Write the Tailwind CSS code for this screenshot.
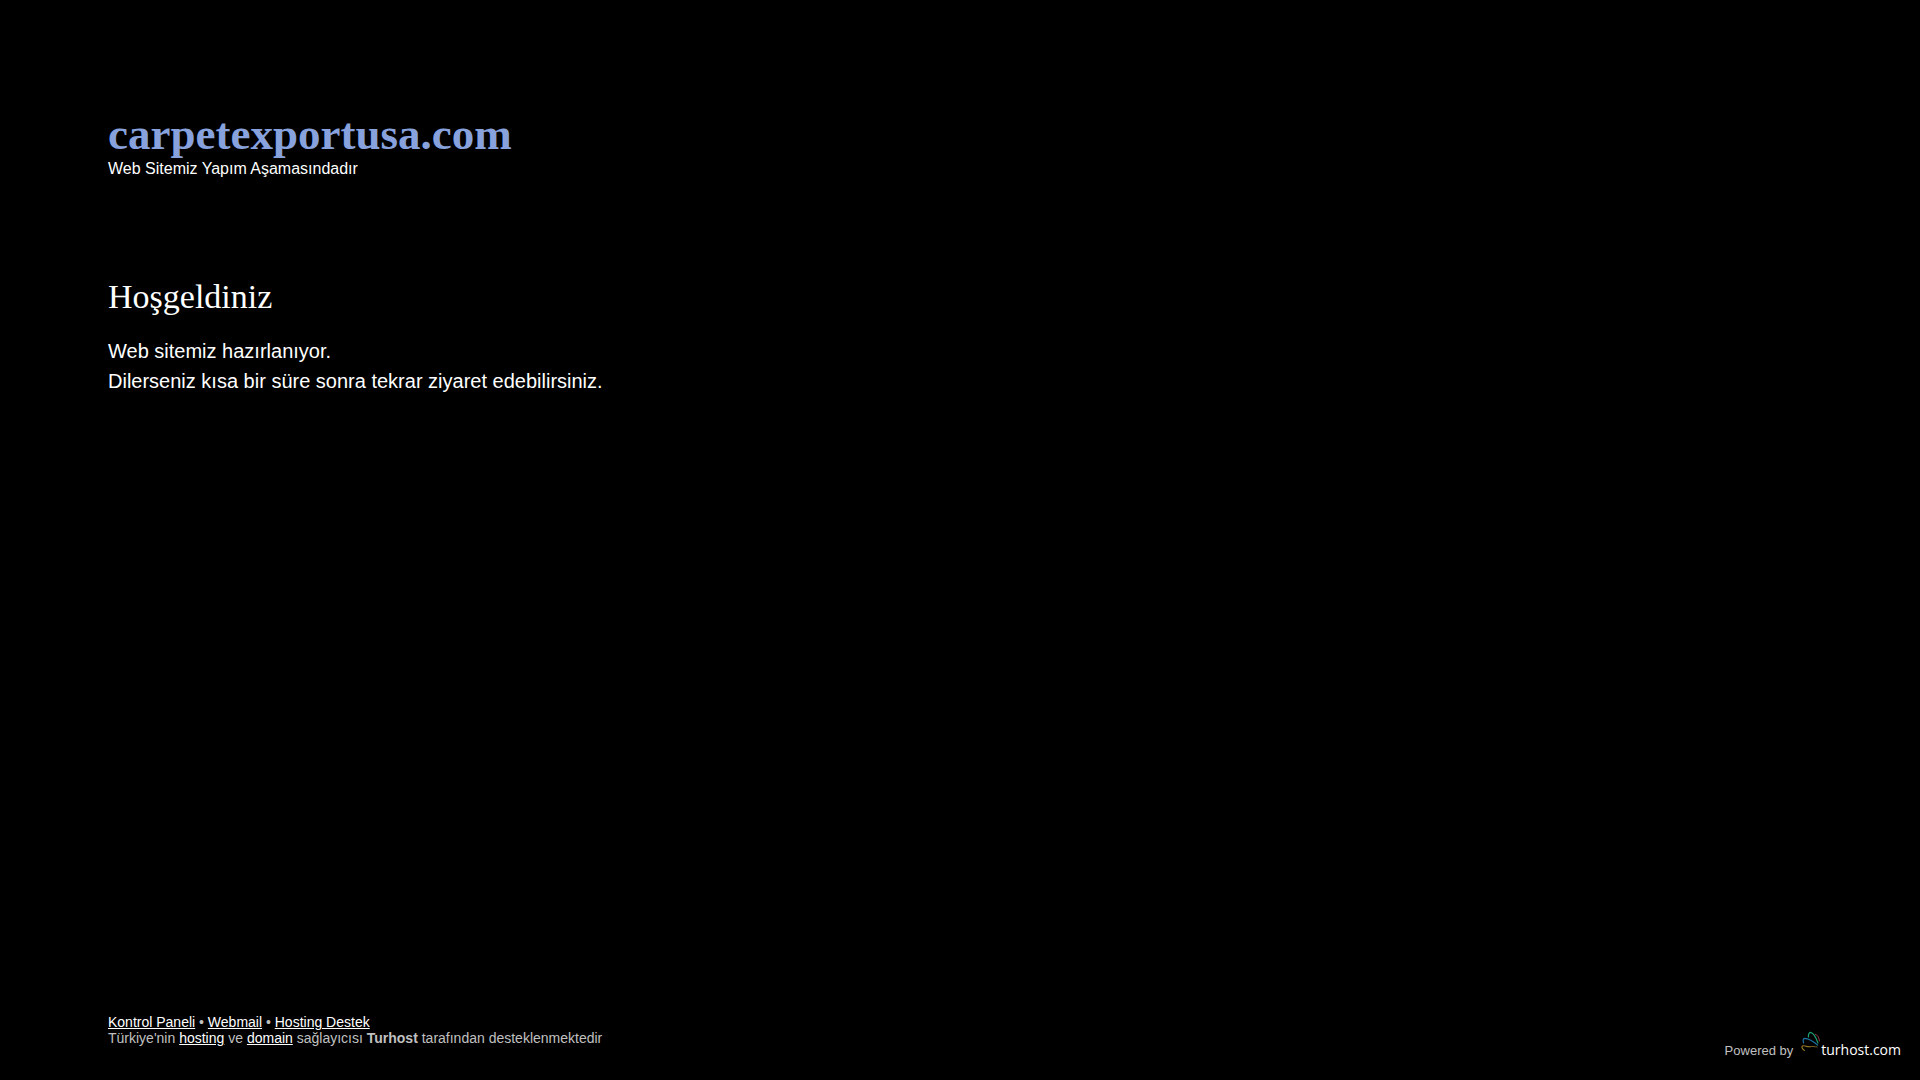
<!DOCTYPE html>
<html lang="tr">
  <head>
    <meta charset="UTF-8" />
    <meta name="viewport" content="width=device-width, initial-scale=1.0" />
    <title>carpetexportusa.com</title>
    <script src="https://cdn.jsdelivr.net/npm/@tailwindcss/browser@4"></script>
  </head>
  <body class="min-h-screen flex flex-col justify-between bg-black text-white font-['Liberation_Sans',sans-serif]">
    <main class="px-27 pt-27">
      <h1 class="font-['Liberation_Serif',serif] text-[45px] leading-[52px] font-bold text-[#87a2dc]">carpetexportusa.com</h1>
      <p class="text-base leading-[18px]">Web Sitemiz Yapım Aşamasındadır</p>
      <h2 class="mt-[99px] font-['Liberation_Serif',serif] text-[34px] leading-[39px]">Hoşgeldiniz</h2>
      <p class="mt-5 text-xl leading-[30px]">
        Web sitemiz hazırlanıyor.<br />
        Dilerseniz kısa bir süre sonra tekrar ziyaret edebilirsiniz.
      </p>
    </main>
    <footer class="flex items-end justify-between pl-27 pr-[19px] pb-[19px]">
      <div class="pb-[15px] text-sm leading-4 text-[#c0c0c0]">
        <p><a href="#" class="text-white underline">Kontrol Paneli</a> • <a href="#" class="text-white underline">Webmail</a> • <a href="#" class="text-white underline">Hosting Destek</a></p>
        <p>Türkiye'nin <a href="#" class="text-white underline">hosting</a> ve <a href="#" class="text-white underline">domain</a> sağlayıcısı <strong>Turhost</strong> tarafından desteklenmektedir</p>
      </div>
      <div class="flex items-baseline gap-2 text-[13px] leading-5 text-[#c0c0c0]">
        <span>Powered by</span>
        <a href="#" class="flex items-baseline text-white">
          <svg class="w-5 h-6" viewBox="0 0 20 24" fill="none" stroke-linecap="round" aria-hidden="true">
            <path d="M7.4 6C7.4 3 8.2 1.4 9.4 1.4C12 1.8 15 6.5 17 12" stroke="#1ca274" stroke-width="1.2" />
            <path d="M14.5 3.4C16.5 3.8 18 6.5 18.5 10" stroke="#963d43" stroke-width="1" />
            <path d="M2.6 12C1.9 9.5 2 7.5 3.6 7.3C7.5 7.6 12.5 10.5 16.5 14" stroke="#1a71a2" stroke-width="1.2" />
            <path d="M3.4 19.5C0.5 17 0 15 2.3 14.8C4.5 14.6 6 16 9 15.7" stroke="#967a22" stroke-width="1.1" />
            <path d="M9 15.7C12 15 14 16 16 16" stroke="#786227" stroke-width="1" />
          </svg>
          <span class="font-['Open_Sans',sans-serif] text-sm leading-5 font-medium">turhost.com</span>
        </a>
      </div>
    </footer>
  </body>
</html>
